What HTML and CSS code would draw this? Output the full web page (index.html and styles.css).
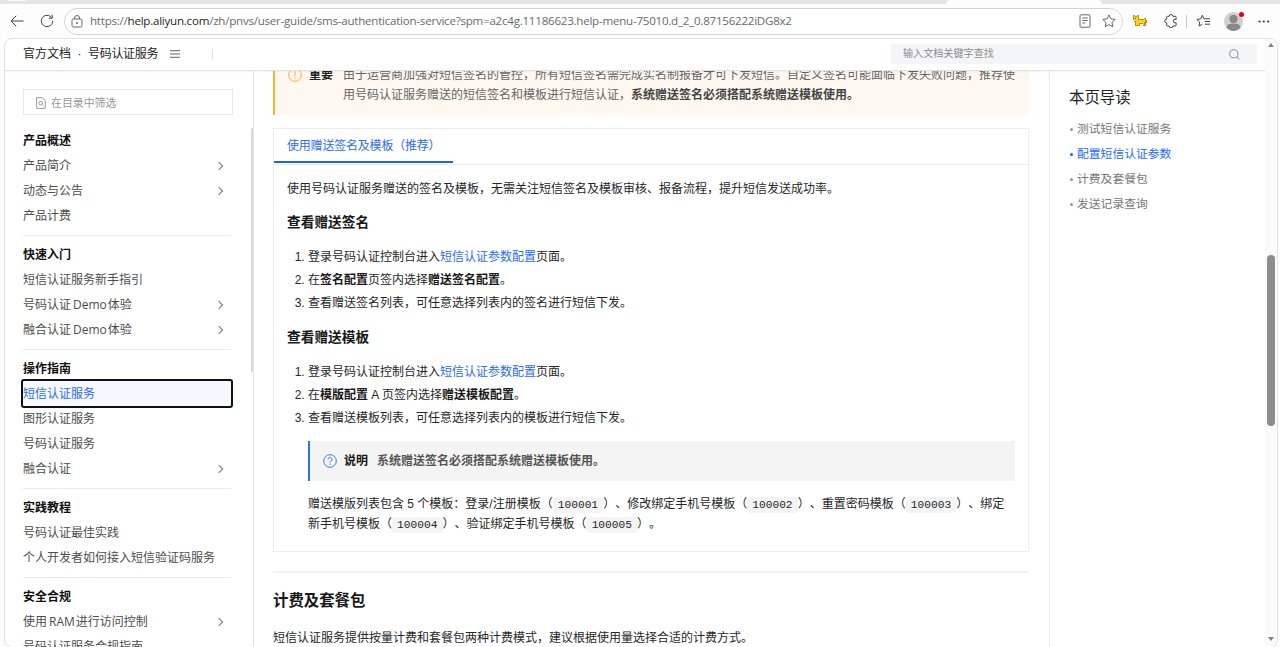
FILE: index.html
```html
<!DOCTYPE html>
<html lang="zh-CN">
<head>
<meta charset="utf-8">
<title>短信认证服务</title>
<link rel="stylesheet" href="styles.css">
</head>
<body>
<div class="browser">
  <div class="tabstrip"><span class="tab-shade"></span><span class="tab-active"></span></div>
  <div class="toolbar">
    <svg class="nav-icon back" width="14" height="12" viewBox="0 0 14 12"><path d="M13.500 6H1M6.200.8 1 6l5.200 5.200"/></svg>
    <svg class="nav-icon reload" width="14" height="14" viewBox="0 0 14 14"><path d="M12.700 7A5.700 5.700 0 1 1 10.800 2.700L12 3.900M12.200.7v3.500H8.700"/></svg>
    <div class="address">
      <svg class="lock" width="12" height="13" viewBox="0 0 12 13"><rect x="1" y="4" width="10" height="8" rx="1.500"/><path d="M3.500 4V3a2.500 2.500 0 0 1 5 0v1"/><circle class="dot" cx="6" cy="8" r="1"/></svg>
      <span class="url">https://<b>help.aliyun.com</b>/zh/pnvs/user-guide/sms-authentication-service?spm=a2c4g.11186623.help-menu-75010.d_2_0.87156222iDG8x2</span>
      <svg class="reader" width="12" height="14" viewBox="0 0 12 14"><rect x="1" y=".8" width="10" height="12.400" rx="1"/><path d="M3.300 4h5.400M3.300 6.500h5.400M3.300 9h3"/></svg>
      <svg class="star" width="14" height="14" viewBox="0 0 14 14"><path d="m7 .9 1.800 4 4.400.5-3.200 3 .8 4.300L7 10.600l-3.800 2.100.8-4.300-3.200-3 4.400-.5z"/></svg>
    </div>
    <svg class="cat" width="14" height="12" viewBox="0 0 14 12"><path class="cat-edge" d="M0 0h2v1h2V0h2v4h5V3h2v2h1v3h-1v3h-3V9H7v2H2V7H1V5H0z"/><path class="cat-fill" d="M1 1h1v1h2V1h1v4h6V4h1v3h-1v3h-1V8H6v2H3V6H1z"/><path class="cat-eye" d="M2 3h1v1H2z"/></svg>
    <svg class="puzzle" width="14" height="14" viewBox="0 0 14 14"><path d="M3.500 2.300h1.700a1.800 1.800 0 0 1 3.600 0h2.500a.8.8 0 0 1 .8.8v2.300h-1.200a1.700 1.700 0 0 0 0 3.400h1.200v2.400a.8.8 0 0 1-.8.8H8.800a1.800 1.800 0 0 1-3.600 0H3.500a.8.8 0 0 1-.8-.8V8.900a1.900 1.900 0 0 1 0-3.800v-2a.8.8 0 0 1 .8-.8z"/></svg>
    <span class="separator"></span>
    <svg class="favs" width="15" height="14" viewBox="0 0 15 14"><path d="M8 4.800 6.300 1.300 4.700 4.900.9 5.400l2.800 2.700-.7 4 3.300-1.800M8 4.800h6M8.800 7.500H14M8.800 10.200H14"/></svg>
    <span class="avatar"><svg width="19" height="19" viewBox="0 0 19 19"><circle cx="9.500" cy="9.500" r="9.500" fill="#d2d0ce"/><circle cx="9.500" cy="7" r="4.200" fill="#8a8886"/><path d="M2.500 15.800c.7-4 3-4 7-4s6.300 0 7 4A9.500 9.500 0 0 1 2.500 15.800" fill="#8a8886"/></svg><i></i></span>
    <svg class="dots" width="12" height="3" viewBox="0 0 12 3"><circle cx="1.500" cy="1.500" r="1.100"/><circle cx="5.800" cy="1.500" r="1.100"/><circle cx="10.100" cy="1.500" r="1.100"/></svg>
  </div>

  <div class="page">
    <div class="site">
      <header class="site-header">
        <span>官方文档</span><span class="mid">·</span><span class="product">号码认证服务</span>
        <svg class="menu" width="10" height="8" viewBox="0 0 10 8"><path d="M0 .7h10M0 4h10M0 7.300h10"/></svg>
        <span class="header-line"></span>
        <div class="search"><span>输入文档关键字查找</span><svg width="11" height="11" viewBox="0 0 11 11"><circle cx="4.800" cy="4.800" r="4.100"/><path d="m7.800 7.800 2.700 2.700"/></svg></div>
      </header>
      <div class="columns">
        <aside class="sidebar">
          <div class="filter"><svg width="10" height="12" viewBox="0 0 10 12"><path d="M.6.6h5.700l3 3v7.700H.6zM6.300 7.700l1.200 1.200"/><circle cx="4.700" cy="6.200" r="1.800"/></svg>在目录中筛选</div>
          <nav>
            <section><h4>产品概述</h4><a class="more">产品简介</a><a class="more">动态与公告</a><a>产品计费</a></section>
            <section><h4>快速入门</h4><a>短信认证服务新手指引</a><a class="more">号码认证<em>Demo</em>体验</a><a class="more">融合认证<em>Demo</em>体验</a></section>
            <section><h4>操作指南</h4><a class="current">短信认证服务</a><a>图形认证服务</a><a>号码认证服务</a><a class="more">融合认证</a></section>
            <section><h4>实践教程</h4><a>号码认证最佳实践</a><a>个人开发者如何接入短信验证码服务</a></section>
            <section><h4>安全合规</h4><a class="more">使用<em>RAM</em>进行访问控制</a><a>号码认证服务合规指南</a></section>
          </nav>
          <span class="side-thumb"></span>
        </aside>
        <main class="article">
          <div class="alert">
            <svg width="14" height="14" viewBox="0 0 14 14"><circle cx="7" cy="7" r="6.300"/><path d="M7 3.300v4.900M7 9.500v1.300"/></svg>
            <strong class="alert-title">重要</strong>
            <p>由于运营商加强对短信签名的管控，所有短信签名需完成实名制报备才可下发短信。自定义签名可能面临下发失败问题，推荐使<br>用号码认证服务赠送的短信签名和模板进行短信认证，<strong>系统赠送签名必须搭配系统赠送模板使用。</strong></p>
          </div>
          <div class="card">
            <div class="tabs"><span class="tab">使用赠送签名及模板（推荐）</span></div>
            <div class="card-body">
              <p>使用号码认证服务赠送的签名及模板，无需关注短信签名及模板审核、报备流程，提升短信发送成功率。</p>
              <h3>查看赠送签名</h3>
              <ol>
                <li>登录号码认证控制台进入<a>短信认证参数配置</a>页面。</li>
                <li>在<strong>签名配置</strong>页签内选择<strong>赠送签名配置</strong>。</li>
                <li>查看赠送签名列表，可任意选择列表内的签名进行短信下发。</li>
              </ol>
              <h3>查看赠送模板</h3>
              <ol>
                <li>登录号码认证控制台进入<a>短信认证参数配置</a>页面。</li>
                <li>在<strong>模版配置</strong> A 页签内选择<strong>赠送模板配置</strong>。</li>
                <li>查看赠送模板列表，可任意选择列表内的模板进行短信下发。</li>
              </ol>
              <div class="note">
                <svg width="14" height="14" viewBox="0 0 14 14"><circle cx="7" cy="7" r="6.300"/><path d="M5 5.500a2 2 0 1 1 3 1.700c-.7.400-1 .7-1 1.300M7 9.600v1.200"/></svg>
                <strong class="note-title">说明</strong><strong class="note-text">系统赠送签名必须搭配系统赠送模板使用。</strong>
              </div>
              <p class="templates">赠送模版列表包含 5 个模板：登录/注册模板（<code>100001</code>）、修改绑定手机号模板（<code>100002</code>）、重置密码模板（<code>100003</code>）、绑定<br>新手机号模板（<code>100004</code>）、验证绑定手机号模板（<code>100005</code>）。</p>
            </div>
          </div>
          <hr>
          <h2>计费及套餐包</h2>
          <p>短信认证服务提供按量计费和套餐包两种计费模式，建议根据使用量选择合适的计费方式。</p>
        </main>
        <aside class="toc">
          <h2>本页导读</h2>
          <a>测试短信认证服务</a><a class="active">配置短信认证参数</a><a>计费及套餐包</a><a>发送记录查询</a>
        </aside>
      </div>
    </div>
    <div class="scrollbar"><span class="arrow up"></span><span class="thumb"></span><span class="arrow down"></span></div>
  </div>
</div>
</body>
</html>
```

FILE: styles.css
```css
* { box-sizing: border-box; }
body, p, h2, h3, h4, ol { margin: 0; }
body { background: #fff; overflow: hidden; color: #262626; font: 12px/20px "Liberation Sans", "Noto Sans CJK SC", sans-serif; text-spacing-trim: space-all; }
svg { fill: none; stroke: currentColor; flex: none; }
.browser { width: 1280px; height: 647px; display: flex; flex-direction: column; overflow: hidden; background: #fdfdfd; }

/* Browser chrome */
.tabstrip { height: 4px; flex: none; display: flex; background: #e4e4e4; }
.tab-shade { width: 18px; height: 1px; margin-left: 8px; background: #f7f7f7; }
.tab-active { width: 156px; margin-left: 920px; background: #fdfdfd; border-radius: 4px 4px 0 0; }
.toolbar { height: 34px; flex: none; display: flex; align-items: center; color: #444; }
.back { margin-left: 10px; }
.reload { margin-left: 16px; }
.address { width: 1059px; height: 27px; margin-left: 10px; padding: 0 6px 0 6px; display: flex; align-items: center; border: 1px solid #d4d4d4; border-radius: 14px; background: #fff; color: #6b6666; }
.lock .dot { fill: currentColor; stroke: none; }
.url { width: 999px; margin-left: 7px; white-space: nowrap; font: 11.6px/20px "Open Sans", "Noto Sans", sans-serif; color: #6a6a6a; letter-spacing: -0.25px; }
.url b { font-weight: 400; color: #1f1f1f; }
.reader { margin-left: 1px; }
.star { margin-left: 11px; }
.cat { margin-left: 10px; stroke: none; }
.cat-edge { fill: #c48d1c; }
.cat-fill { fill: #ffd21c; }
.cat-eye { fill: #4d3510; }
.puzzle { margin-left: 17px; }
.separator { width: 1px; height: 13px; margin-left: 8px; background: #ccc; }
.favs { margin-left: 9px; }
.avatar { position: relative; width: 19px; height: 19px; margin-left: 13px; }
.avatar svg { display: block; stroke: none; }
.avatar i { position: absolute; right: -1px; top: 0; width: 5px; height: 5px; border-radius: 50%; background: #e60012; }
.dots { margin-left: 15px; fill: #333; stroke: none; }

/* Page frame */
.page { width: 1274px; height: 610px; flex: none; margin-left: 4px; display: flex; overflow: hidden; border: 1px solid #e2e2e2; border-radius: 8px; background: #fff; }
.site { width: 1260px; display: flex; flex-direction: column; }
.site-header { height: 32px; flex: none; display: flex; align-items: center; padding: 0 8px 1px 18px; border-bottom: 1px solid #e2e2e2; box-shadow: 0 1px 2px rgba(0,0,0,.05); z-index: 1; color: #222; }
.mid { width: 17px; text-align: center; }
.product { letter-spacing: -0.3px; }
.menu { margin-left: 12px; color: #666; }
.header-line { width: 1px; height: 10px; margin-left: 32px; background: #ddd; }
.search { width: 366px; height: 20px; margin-left: auto; padding: 0 17px 0 12px; display: flex; align-items: center; justify-content: space-between; background: #f4f5f7; color: #8c8c8c; font-size: 10.1px; }
.columns { flex: 1; min-height: 0; display: flex; }

/* Sidebar */
.sidebar { position: relative; width: 249px; flex: none; padding: 18px 0 0 18px; border-right: 1px solid #e5e5e5; overflow: hidden; }
.filter { width: 210px; height: 26px; padding: 1px 0 0 12px; display: flex; align-items: center; gap: 5px; border: 1px solid #e8e8e8; color: #999; font-size: 10.9px; }
nav { width: 208px; margin-top: 13px; }
section { padding-bottom: 7px; margin-bottom: 6px; border-bottom: 1px solid #ebebeb; }
h4 { height: 25px; padding-top: 1px; font-size: 12px; line-height: 25px; font-weight: 700; color: #111; }
section a { display: flex; align-items: center; height: 25px; padding-top: 1px; color: #4d4d4d; white-space: nowrap; }
section em { font: 12px/20px "Open Sans", sans-serif; margin: -1px 1px 0 2px; }
.more::after { content: ""; width: 5px; height: 5px; margin: 0 9px 0 auto; border: solid #777; border-width: 1px 1px 0 0; transform: rotate(45deg); }
section .current { width: 208px; color: #2b6cf0; background: #f5f8ff; outline: 2px solid #111; outline-offset: -0.5px; border-radius: 1px; }
.side-thumb { position: absolute; right: -1px; top: 57px; width: 3px; height: 244px; background: #d8d8d8; border-radius: 2px; }

/* Article */
.article { width: 796px; flex: none; padding: 0 20px 0 19px; border-right: 1px solid #ebebeb; overflow: hidden; }
.alert { height: 50px; margin-top: -6px; padding-left: 12px; display: flex; background: #fff8f0; border-left: 2px solid #fbb030; color: #666; white-space: nowrap; }
.alert svg { margin: 3px 0 0 1px; color: #fbb030; }
.alert-title { width: 24px; margin: 0 10px 0 7px; color: #222; }
.alert p strong { color: #444; }
.card { height: 424px; margin-top: 13px; border: 1px solid #ececec; }
.tabs { height: 36px; border-bottom: 1px solid #ebebeb; }
.tab { display: block; width: 179px; height: 34px; padding-left: 13px; line-height: 34px; border-bottom: 2px solid #1f66dc; color: #2b6cf0; letter-spacing: -0.2px; white-space: nowrap; }
.card-body { padding: 14px 13px 0; }
h3 { font-size: 13.7px; line-height: 20px; margin: 14px 0; color: #181818; }
ol { padding-left: 21px; }
li { height: 23.2px; }
ol + h3 { margin-top: 11px; }
li a { color: #2b6cf0; }
strong { color: #181818; }
.note { height: 40px; margin: 10px 0 13px 21px; padding-left: 13px; display: flex; align-items: center; background: #f4f4f4; border-left: 2px solid #2b73f0; }
.note svg { color: #3b7cf0; }
.note-title { margin: 0 9px 0 7px; }
.note-text { color: #555; }
.templates { margin-left: 21px; line-height: 20.3px; white-space: nowrap; }
code { display: inline-block; width: 50.5px; height: 16px; text-align: center; line-height: 17px; font-family: "Liberation Mono", monospace; font-size: 11.2px; background: #f4f4f4; border-radius: 3px; }
hr { height: 2px; margin: 19px 0 17px; border: 0; background: #f2f2f2; }
h2 { font-size: 15.4px; line-height: 22px; }
.article h2 { color: #181818; margin-bottom: 16px; }

/* Table of contents */
.toc { padding: 16px 0 0 19px; }
.toc h2 { font-weight: 400; color: #222; margin-bottom: 7.5px; }
.toc a { display: flex; align-items: center; height: 25px; color: #777; font-size: 11.8px; }
.toc a::before { content: ""; width: 3px; height: 3px; margin: 0 4px 0 1px; border-radius: 50%; background: #999; }
.toc .active { color: #1b6bff; }
.toc .active::before { background: #1b6bff; }

/* Scrollbar */
.scrollbar { width: 12px; flex: none; padding: 4px 0; display: flex; flex-direction: column; align-items: center; background: #fbfbfb; }
.arrow { border: 3px solid transparent; }
.up { border-top: 0; border-bottom: 4px solid #858585; }
.thumb { width: 8px; height: 171px; margin: 208px 0 auto; border-radius: 4px; background: #8c8c8c; }
.down { border-bottom: 0; border-top: 4px solid #858585; margin-bottom: 2px; }
```
